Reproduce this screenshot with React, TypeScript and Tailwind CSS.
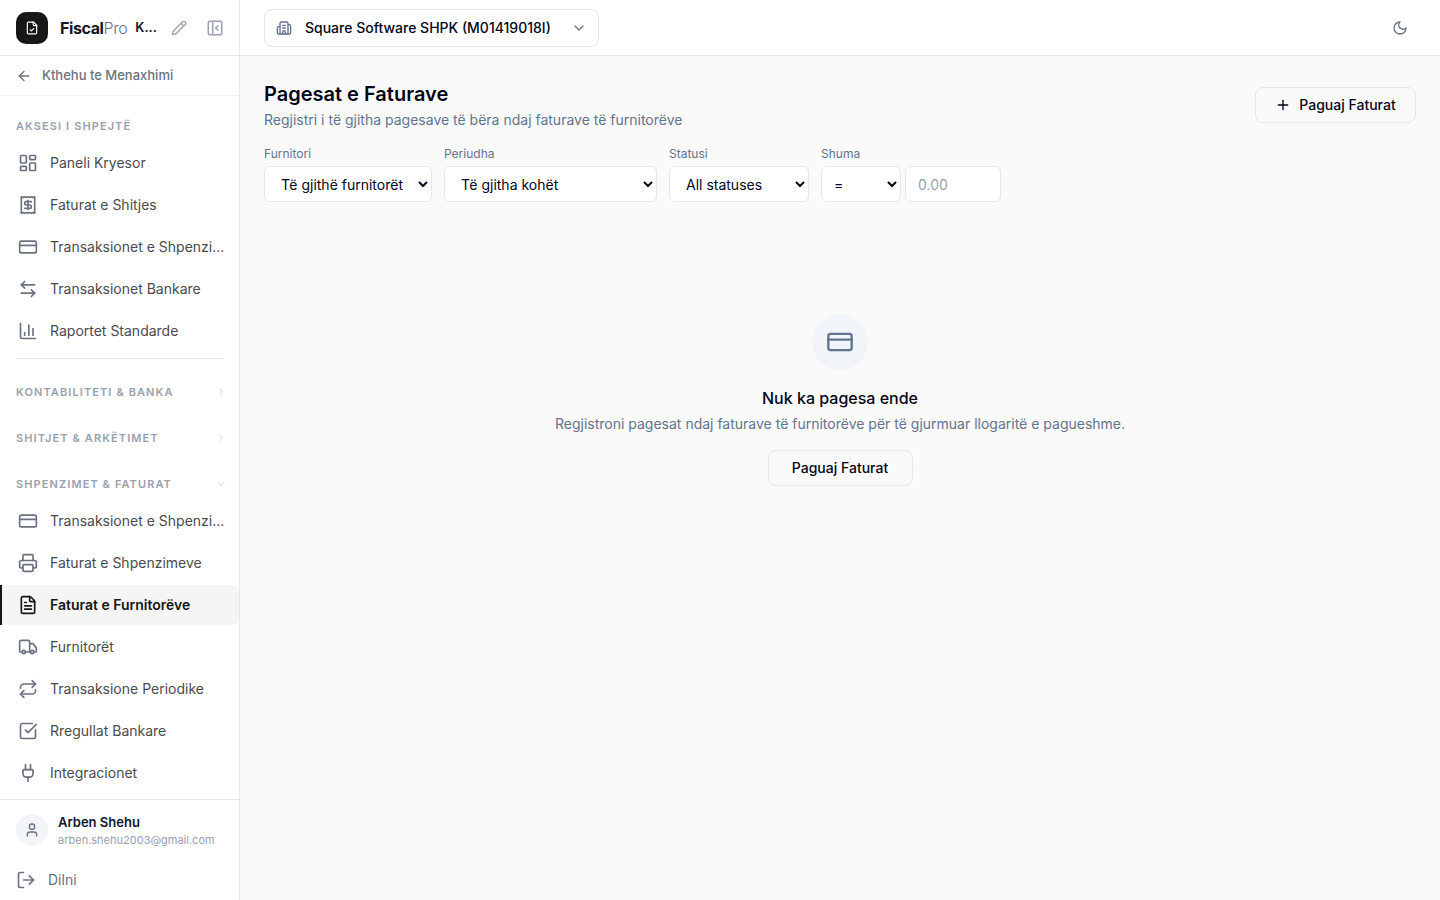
import {
    ArrowLeft,
    ArrowLeftRight,
    Building2,
    ChartColumn,
    ChevronDown,
    ChevronRight,
    CreditCard,
    FileText,
    LayoutDashboard,
    LogOut,
    PanelLeftClose,
    Pencil,
    Plug,
    Plus,
    Printer,
    Receipt,
    Repeat,
    SquareCheckBig,
    Truck,
    User,
} from "lucide-react";

const quickAccess = [
    { title: "Paneli Kryesor", icon: LayoutDashboard },
    { title: "Faturat e Shitjes", icon: Receipt },
    { title: "Transaksionet e Shpenzi...", icon: CreditCard },
    { title: "Transaksionet Bankare", icon: ArrowLeftRight },
    { title: "Raportet Standarde", icon: ChartColumn },
];

const expenses = [
    { title: "Transaksionet e Shpenzi...", icon: CreditCard },
    { title: "Faturat e Shpenzimeve", icon: Printer },
    { title: "Faturat e Furnitorëve", icon: FileText, active: true },
    { title: "Furnitorët", icon: Truck },
    { title: "Transaksione Periodike", icon: Repeat },
    { title: "Rregullat Bankare", icon: SquareCheckBig },
    { title: "Integracionet", icon: Plug },
];

const svgProps = {
    viewBox: "0 0 24 24",
    fill: "none",
    stroke: "currentColor",
    strokeWidth: 2,
    strokeLinecap: "round" as const,
    strokeLinejoin: "round" as const,
    "aria-hidden": true,
};

function FileCheckIcon({ className }: { className: string }) {
    return (
        <svg {...svgProps} className={className}>
            <path d="M15 2H6a2 2 0 0 0-2 2v16a2 2 0 0 0 2 2h12a2 2 0 0 0 2-2V7Z" />
            <path d="M14 2v4a2 2 0 0 0 2 2h4" />
            <path d="m9 15 2 2 4-4" />
        </svg>
    );
}

function MoonIcon({ className }: { className: string }) {
    return (
        <svg {...svgProps} className={className}>
            <path d="M12 3a6 6 0 0 0 9 9 9 9 0 1 1-9-9Z" />
        </svg>
    );
}

function NavList({ items }: { items: { title: string; icon: typeof Plug; active?: boolean }[] }) {
    return (
        <ul className="mt-px space-y-0.5">
            {items.map((item) => (
                <li key={item.title}>
                    <a
                        href="#"
                        aria-current={item.active ? "page" : undefined}
                        className={
                            item.active
                                ? "flex h-10 items-center gap-3 rounded-r-md border-l-2 border-[#171717] bg-[#f5f5f5] pr-3 pl-4 text-sm font-semibold text-[#171717]"
                                : "flex h-10 items-center gap-3 border-l-2 border-transparent pr-3 pl-4 text-sm text-[#4b4b4f]"
                        }
                    >
                        <item.icon className={item.active ? "size-5 shrink-0" : "size-5 shrink-0 text-gray-500"} />
                        <span className="whitespace-nowrap">{item.title}</span>
                    </a>
                </li>
            ))}
        </ul>
    );
}

function GroupButton({ title, open }: { title: string; open?: boolean }) {
    return (
        <button
            type="button"
            aria-expanded={!!open}
            className="flex h-8 w-full items-center justify-between px-4 text-[11px] font-semibold tracking-widest text-gray-400 uppercase"
        >
            {title}
            {open ? (
                <ChevronDown className="-mr-1 size-3 text-gray-300" />
            ) : (
                <ChevronRight className="-mr-1 size-3 text-gray-300" />
            )}
        </button>
    );
}

function Sidebar() {
    return (
        <aside className="flex w-60 shrink-0 flex-col border-r border-gray-200 bg-white">
            <div className="flex h-14 shrink-0 items-center border-b border-gray-200 pr-[15px] pl-4">
                <div className="flex size-8 shrink-0 items-center justify-center rounded-[10px] bg-[#171717] text-white">
                    <FileCheckIcon className="size-3.5" />
                </div>
                <span className="ml-3 text-base font-bold tracking-tight text-gray-900">
                    Fiscal<span className="font-light text-gray-500">Pro</span>
                </span>
                <span className="ml-2 flex-1 text-[13px] font-semibold whitespace-nowrap text-gray-900">K...</span>
                <button type="button" aria-label="Ndrysho" className="shrink-0 text-gray-400">
                    <Pencil className="size-4" />
                </button>
                <button type="button" aria-label="Mbyll menunë" className="ml-[19px] shrink-0 text-gray-400">
                    <PanelLeftClose className="size-[18px]" />
                </button>
            </div>

            <a
                href="#"
                className="flex h-10 shrink-0 items-center gap-2.5 border-b border-gray-100 px-4 text-[13px] font-medium text-gray-500"
            >
                <ArrowLeft className="size-4" />
                Kthehu te Menaxhimi
            </a>

            <nav className="min-h-0 flex-1 overflow-hidden pt-3.5">
                <h2 className="flex h-8 items-center px-4 text-[11px] font-semibold tracking-widest text-gray-400 uppercase">
                    Aksesi i shpejtë
                </h2>
                <NavList items={quickAccess} />
                <hr className="mx-4 mt-[7px] border-gray-200" />
                <div className="mt-[17px] space-y-3.5">
                    <GroupButton title="Kontabiliteti & Banka" />
                    <GroupButton title="Shitjet & Arkëtimet" />
                    <div>
                        <GroupButton title="Shpenzimet & Faturat" open />
                        <NavList items={expenses} />
                    </div>
                </div>
            </nav>

            <div className="shrink-0 border-t border-gray-200">
                <div className="flex items-center gap-2.5 px-4 pt-3">
                    <div className="flex size-8 shrink-0 items-center justify-center rounded-full bg-gray-100 text-gray-500">
                        <User className="size-4" />
                    </div>
                    <div className="min-w-0">
                        <p className="text-[13px] leading-5 font-semibold text-gray-900">Arben Shehu</p>
                        <p className="text-[11px] leading-4 whitespace-nowrap text-gray-400">arben.shehu2003@gmail.com</p>
                    </div>
                </div>
                <button type="button" className="mt-3 flex h-10 w-full items-center gap-3 px-4 text-sm text-gray-500">
                    <LogOut className="size-5" />
                    Dilni
                </button>
            </div>
        </aside>
    );
}

function Filters() {
    const label = "mb-1 block text-xs text-slate-500";
    const field = "h-9 rounded-md border border-gray-200 bg-white text-sm text-slate-950";

    return (
        <form className="mt-4 flex flex-wrap items-end gap-3">
            <div>
                <label htmlFor="supplier" className={label}>Furnitori</label>
                <select id="supplier" className={`${field} w-42 px-3`}>
                    <option>Të gjithë furnitorët</option>
                </select>
            </div>
            <div>
                <label htmlFor="period" className={label}>Periudha</label>
                <select id="period" className={`${field} w-[213px] px-3`}>
                    <option>Të gjitha kohët</option>
                </select>
            </div>
            <div>
                <label htmlFor="status" className={label}>Statusi</label>
                <select id="status" className={`${field} w-35 px-3`}>
                    <option>All statuses</option>
                </select>
            </div>
            <div>
                <label htmlFor="amount" className={label}>Shuma</label>
                <div className="flex gap-1">
                    <select aria-label="Krahasimi" className={`${field} w-20 px-2`}>
                        <option>=</option>
                    </select>
                    <input id="amount" type="text" placeholder="0.00" className={`${field} w-24 px-3 placeholder:text-gray-400`} />
                </div>
            </div>
        </form>
    );
}

export default function App() {
    return (
        <div className="flex h-screen bg-[#fafafa] font-['Inter',sans-serif] text-slate-950">
            <Sidebar />
            <div className="flex min-w-0 flex-1 flex-col">
                <header className="flex h-14 shrink-0 items-center justify-between border-b border-gray-200 bg-white px-6">
                    <button
                        type="button"
                        className="flex h-[38px] min-w-[335px] items-center rounded-lg border border-gray-200 px-[11px] text-sm font-medium"
                    >
                        <Building2 className="mr-[13px] size-4 text-slate-500" />
                        Square Software SHPK (M01419018I)
                        <ChevronDown className="ml-auto size-4 text-slate-500" />
                    </button>
                    <button type="button" aria-label="Ndrysho temën" className="flex size-8 items-center justify-center text-gray-500">
                        <MoonIcon className="size-4" />
                    </button>
                </header>

                <main className="min-h-0 flex-1 overflow-auto p-6">
                    <div className="flex items-center justify-between">
                        <div>
                            <h1 className="text-xl leading-7 font-semibold">Pagesat e Faturave</h1>
                            <p className="mt-0.5 text-sm text-slate-500">
                                Regjistri i të gjitha pagesave të bëra ndaj faturave të furnitorëve
                            </p>
                        </div>
                        <button
                            type="button"
                            className="flex h-9 min-w-[161px] items-center justify-center gap-2 rounded-lg border border-gray-200 px-4 text-sm font-medium"
                        >
                            <Plus className="size-4" />
                            Paguaj Faturat
                        </button>
                    </div>

                    <Filters />

                    <section className="flex flex-col items-center pt-28 text-center">
                        <div className="flex size-14 items-center justify-center rounded-full bg-slate-100 text-slate-500">
                            <CreditCard className="size-7" />
                        </div>
                        <h2 className="mt-4 text-base font-medium">Nuk ka pagesa ende</h2>
                        <p className="mt-1 text-sm text-slate-500">
                            Regjistroni pagesat ndaj faturave të furnitorëve për të gjurmuar llogaritë e pagueshme.
                        </p>
                        <button
                            type="button"
                            className="mt-4 h-9 min-w-[145px] rounded-lg border border-gray-200 px-5 text-sm font-medium"
                        >
                            Paguaj Faturat
                        </button>
                    </section>
                </main>
            </div>
        </div>
    );
}
